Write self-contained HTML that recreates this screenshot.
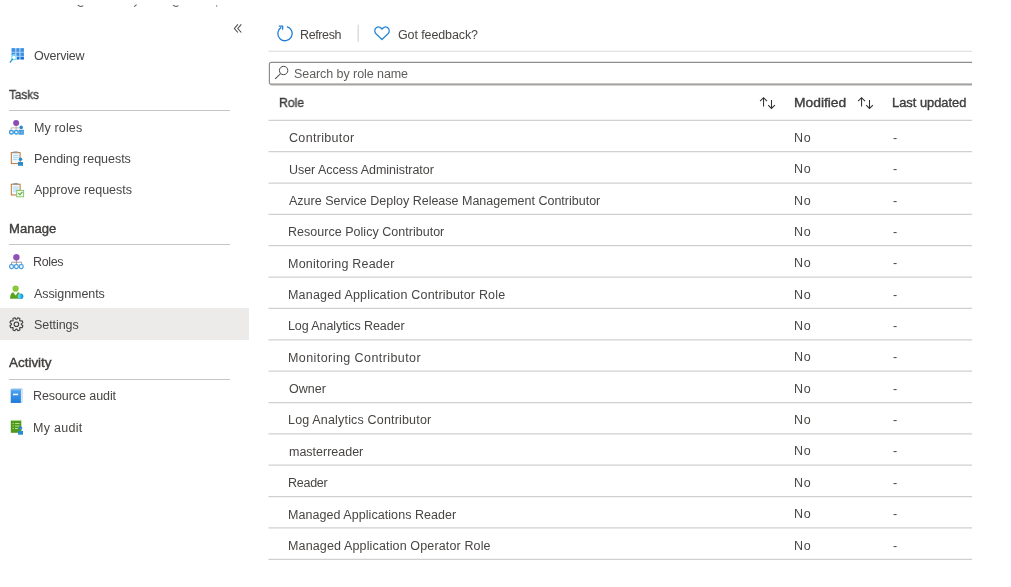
<!DOCTYPE html>
<html><head><meta charset="utf-8">
<style>
html,body{margin:0;padding:0;background:#fff;}
body{width:1011px;height:587px;overflow:hidden;position:relative;font-family:"Liberation Sans",sans-serif;font-size:12.5px;color:#484644;}
.t{position:absolute;white-space:nowrap;line-height:16px;will-change:transform;}
.b{font-weight:400;-webkit-text-stroke:0.35px #323130;}
.ln{position:absolute;height:1px;}
.ic{position:absolute;overflow:visible;}
</style></head><body>
<svg class="ic" style="left:0;top:0.6px" width="240" height="10" viewBox="0 0 240 10">
<path d="M77.8 4.2 Q80.5 6.6 83.2 4.6" fill="none" stroke="#605e5c" stroke-width="1.1"/>
<path d="M134.2 5.6 L136.6 3.6" fill="none" stroke="#605e5c" stroke-width="1.1"/>
<path d="M173 4.2 Q175.7 6.6 178.4 4.6" fill="none" stroke="#605e5c" stroke-width="1.1"/>
<path d="M216.7 4 V5.8" fill="none" stroke="#8a8886" stroke-width="1"/>
</svg>
<svg class="ic" style="left:230px;top:20px" width="16" height="16" viewBox="0 0 16 16"><path d="M7.9 4.4 L4.4 8.5 L7.9 12.5 M11.3 4.4 L7.8 8.5 L11.3 12.5" fill="none" stroke="#4a4846" stroke-width="1.05"/></svg>
<svg class="ic" style="left:8px;top:46px" width="18" height="18" viewBox="0 0 18 18">
<rect x="3.6" y="2.2" width="12.3" height="11.3" fill="#b4d4f6"/>
<g fill="#3d8fe4"><rect x="3.6" y="2.2" width="3.6" height="3.6"/><rect x="8.4" y="2.2" width="2.9" height="3.6"/><rect x="12.5" y="2.2" width="3.4" height="3.6"/>
<rect x="3.6" y="6.7" width="3.6" height="3.2"/><rect x="8.4" y="6.7" width="2.9" height="3.2"/><rect x="12.5" y="6.7" width="3.4" height="3.2"/></g>
<g fill="#1672d8"><rect x="3.6" y="10.8" width="3.6" height="2.7"/><rect x="8.4" y="10.8" width="2.9" height="2.7"/><rect x="12.5" y="10.8" width="3.4" height="2.7"/></g>
<circle cx="6" cy="11.4" r="2.6" fill="#fff" stroke="#fff" stroke-width="0.8"/>
<circle cx="6" cy="11.5" r="2.3" fill="#fff" stroke="#4fd3f6" stroke-width="1.0"/>
<path d="M4.4 13.3 L2.2 16.2" stroke="#2b95c9" stroke-width="1.3" stroke-linecap="round"/>
</svg><div class="t" style="left:33.70px;top:48.07px;letter-spacing:-0.224px;">Overview</div>
<div class="t b" style="left:9.45px;top:86.57px;transform:scaleX(0.9353);transform-origin:0 0;">Tasks</div>
<div class="ln" style="left:9px;top:110px;width:221px;background:#c8c6c4"></div>
<div class="t b" style="left:8.70px;top:221.07px;transform:scaleX(1.0459);transform-origin:0 0;">Manage</div>
<div class="ln" style="left:9px;top:244px;width:221px;background:#c8c6c4"></div>
<div style="position:absolute;left:0;top:307.7px;width:249px;height:32.6px;background:#edebe9"></div>
<div class="t b" style="left:9.15px;top:355.47px;transform:scaleX(1.0747);transform-origin:0 0;">Activity</div>
<div class="ln" style="left:9px;top:379px;width:221px;background:#c8c6c4"></div>
<svg class="ic" style="left:8px;top:118px" width="18" height="18" viewBox="0 0 18 18">
<path d="M3 9.9 H11.5 M3 9.9 V11.8 M8.15 7 V11.8" stroke="#b0a89e" stroke-width="0.8" fill="none"/>
<circle cx="8.15" cy="5" r="3" fill="#8b4cb5"/>
<circle cx="13.2" cy="9.4" r="1.8" fill="#2b8ccd"/>
<rect x="1.6" y="12.5" width="3.7" height="3.5" rx="1.4" fill="none" stroke="#3f9be0" stroke-width="1.4"/>
<rect x="6.5" y="12.5" width="3.7" height="3.5" rx="1.4" fill="none" stroke="#3f9be0" stroke-width="1.4"/>
<path d="M10.7 11.8 H15.9 V16.7 H10.7 Z" fill="#3f9be0"/>
<path d="M11.8 13.2 V15.4 M13.3 13.2 V15.4 M14.8 13.2 V15.4" stroke="#8cc7f0" stroke-width="0.6"/>
</svg><div class="t" style="left:33.50px;top:120.37px;letter-spacing:0.132px;">My roles</div>
<svg class="ic" style="left:8px;top:149px" width="18" height="18" viewBox="0 0 18 18">
<rect x="3.3" y="3.6" width="8.8" height="11" fill="#eef8ff" stroke="#c27632" stroke-width="1.0"/>
<rect x="5.5" y="2.4" width="4.4" height="1.8" fill="#9a9a9a"/>
<path d="M5 6.5 H10.5 M5 8.5 H10.5 M5 10.5 H9" stroke="#a6d5f5" stroke-width="0.9"/>
<circle cx="12.5" cy="10.2" r="1.8" fill="#2b8ccd"/>
<path d="M10 13 H15 V16.8 H10 Z" fill="#2b8ccd"/>
</svg><div class="t" style="left:33.50px;top:150.97px;letter-spacing:-0.029px;">Pending requests</div>
<svg class="ic" style="left:8px;top:181px" width="18" height="18" viewBox="0 0 18 18">
<rect x="3.3" y="3.2" width="8.8" height="10.8" fill="#eef8ff" stroke="#c27632" stroke-width="1.0"/>
<rect x="5.5" y="2" width="4.4" height="1.8" fill="#9a9a9a"/>
<path d="M5 6 H10.5 M5 8 H10.5 M5 10 H9" stroke="#a6d5f5" stroke-width="0.9"/>
<rect x="8.7" y="9.4" width="6.9" height="6.4" fill="#f3faef" stroke="#86c666" stroke-width="1.0"/>
<path d="M10.2 12.1 L11.9 13.7 L14.4 11" fill="none" stroke="#62b043" stroke-width="1.2"/>
</svg><div class="t" style="left:34.20px;top:182.37px;letter-spacing:0.005px;">Approve requests</div>
<svg class="ic" style="left:8px;top:252px" width="18" height="18" viewBox="0 0 18 18">
<path d="M3.6 10.2 H13.6 M3.6 10.2 V12 M8.4 7.5 V12 M13.6 10.2 V12" stroke="#8a8886" stroke-width="0.8" fill="none"/>
<circle cx="8.4" cy="5.3" r="3.2" fill="#9152b8"/>
<rect x="1.7" y="12.5" width="3.7" height="4" rx="1.4" fill="#fff" stroke="#4a9fe0" stroke-width="1.25"/>
<rect x="6.55" y="12.5" width="3.7" height="4" rx="1.4" fill="#fff" stroke="#4a9fe0" stroke-width="1.25"/>
<rect x="11.4" y="12.5" width="3.7" height="4" rx="1.4" fill="#fff" stroke="#4a9fe0" stroke-width="1.25"/>
</svg><div class="t" style="left:33.20px;top:254.47px;letter-spacing:-0.377px;">Roles</div>
<svg class="ic" style="left:8px;top:283px" width="18" height="18" viewBox="0 0 18 18">
<circle cx="7.6" cy="5.7" r="3.1" fill="#8cc63a"/>
<path d="M2 15.8 Q2.2 9.8 5.2 9.3 L7.6 12.6 L10 9.3 Q11.2 9.5 11.6 10.2 V15.8 Z" fill="#5aa51f"/>
<circle cx="12.5" cy="13.3" r="2.8" fill="#5ad2f4"/>
<path d="M12.5 10.5 A2.8 2.8 0 0 1 12.5 16.1 Z" fill="#1ea5df"/>
</svg><div class="t" style="left:34.20px;top:285.67px;letter-spacing:-0.071px;">Assignments</div>
<svg class="ic" style="left:8px;top:314px" width="18" height="20" viewBox="0 0 18 20">
<path d="M8.70 5.31 L9.96 3.69 L11.90 4.49 L11.65 6.53 L12.07 6.95 L14.11 6.70 L14.91 8.64 L13.29 9.90 L13.29 10.50 L14.91 11.76 L14.11 13.70 L12.07 13.45 L11.65 13.87 L11.90 15.91 L9.96 16.71 L8.70 15.09 L8.10 15.09 L6.84 16.71 L4.90 15.91 L5.15 13.87 L4.73 13.45 L2.69 13.70 L1.89 11.76 L3.51 10.50 L3.51 9.90 L1.89 8.64 L2.69 6.70 L4.73 6.95 L5.15 6.53 L4.90 4.49 L6.84 3.69 L8.10 5.31 Z" fill="none" stroke="#3b3a39" stroke-width="1.05" stroke-linejoin="round"/>
<circle cx="8.4" cy="10.2" r="2.3" fill="none" stroke="#3b3a39" stroke-width="1.05"/>
</svg><div class="t" style="left:34.00px;top:317.07px;letter-spacing:-0.059px;">Settings</div>
<svg class="ic" style="left:8px;top:386px" width="18" height="18" viewBox="0 0 18 18">
<defs><linearGradient id="bk" x1="0" y1="0" x2="0" y2="1"><stop offset="0" stop-color="#4fa6f1"/><stop offset="1" stop-color="#1f7ad9"/></linearGradient></defs>
<path d="M4 2.4 H14.4 V15.9 L12.9 16.9 H2.8 V3.3 Z" fill="#8fbde9"/>
<path d="M12.9 3.6 H14 V15.6 L12.9 16.3 Z" fill="#d6e8f8"/>
<rect x="2.8" y="3.3" width="10" height="13.6" fill="url(#bk)"/>
<rect x="2.8" y="3.3" width="10" height="0.9" fill="#8cc6f6"/>
<rect x="5" y="7.7" width="5.1" height="1.5" fill="#fff"/>
</svg><div class="t" style="left:33.00px;top:388.37px;letter-spacing:-0.077px;">Resource audit</div>
<svg class="ic" style="left:8px;top:417px" width="18" height="18" viewBox="0 0 18 18">
<rect x="2.8" y="3.2" width="10.5" height="12.6" fill="#4f9a1a"/>
<rect x="3.2" y="2.8" width="10" height="1" fill="#cde3b6"/>
<path d="M4.6 6.5 H5.8 M7 6.5 H11.5 M4.6 9 H5.8 M7 9 H11.5 M4.6 11.5 H5.8 M7 11.5 H10" stroke="#b6dc94" stroke-width="1"/>
<circle cx="12.5" cy="11.1" r="1.8" fill="#2b8ccd"/>
<path d="M10 13.9 H15 V17.7 H10 Z" fill="#2b8ccd"/>
</svg><div class="t" style="left:33.00px;top:419.67px;letter-spacing:0.276px;">My audit</div>
<svg class="ic" style="left:275px;top:24px" width="20" height="20" viewBox="0 0 20 20">
<path d="M12 2.6 A7.2 7.2 0 1 1 6.2 3.4" fill="none" stroke="#1f7fd6" stroke-width="1.3"/>
<path d="M3.8 2.2 H7.6 V5.8" fill="none" stroke="#1f7fd6" stroke-width="1.3"/>
</svg><div class="t" style="left:299.90px;top:26.87px;letter-spacing:-0.386px;">Refresh</div>
<svg class="ic" style="left:350px;top:20px" width="16" height="26" viewBox="0 0 16 26"><line x1="8.2" x2="8.2" y1="4.8" y2="21.8" stroke="#d6d4d2" stroke-width="1.2"/></svg>
<svg class="ic" style="left:372px;top:24px" width="20" height="18" viewBox="0 0 20 18">
<path d="M10 5.2 C8.6 2.8 6 2.3 4.2 3.8 C2.2 5.5 2.4 8.2 4.2 10 L10 15.5 L15.8 10 C17.6 8.2 17.8 5.5 15.8 3.8 C14 2.3 11.4 2.8 10 5.2 Z" fill="none" stroke="#2b88d8" stroke-width="1.3" stroke-linejoin="round"/>
</svg><div class="t" style="left:397.80px;top:26.87px;letter-spacing:-0.104px;">Got feedback?</div>
<svg class="ic" style="left:0;top:0" width="1011" height="100" viewBox="0 0 1011 100"><path d="M990 62.35 H271.4 Q269.4 62.35 269.4 64.35 V82.6 Q269.4 84.4 271.4 84.4 H990" fill="#fff" stroke="#8f8d8b" stroke-width="1.2"/><line x1="271" x2="990" y1="84.4" y2="84.4" stroke="#a6a4a2" stroke-width="2"/></svg>
<svg class="ic" style="left:272px;top:64px" width="18" height="18" viewBox="0 0 18 18">
<circle cx="11.6" cy="6.5" r="4.2" fill="none" stroke="#4a4846" stroke-width="1.0"/>
<path d="M8.6 9.5 L3.2 14.9" stroke="#4a4846" stroke-width="1.05"/>
</svg><div class="t" style="left:294.00px;top:66.47px;letter-spacing:-0.071px;color:#605e5c;">Search by role name</div>
<div style="position:absolute;left:972px;top:0;width:39px;height:587px;background:#fff"></div>
<div class="t b" style="left:278.52px;top:95.27px;transform:scaleX(0.9775);transform-origin:0 0;">Role</div>
<svg class="ic" style="left:758px;top:96px" width="20" height="14" viewBox="0 0 20 14">
<path d="M5.55 1.9 V10.4 M2.1 5.1 L5.55 1.7 L9 5.1" fill="none" stroke="#323130" stroke-width="1.05"/>
<path d="M13.5 4 V12.3 M10.2 9.1 L13.5 12.4 L16.9 9.1" fill="none" stroke="#323130" stroke-width="1.05"/>
</svg><div class="t b" style="left:793.69px;top:95.27px;transform:scaleX(1.1059);transform-origin:0 0;">Modified</div>
<svg class="ic" style="left:856px;top:96px" width="20" height="14" viewBox="0 0 20 14">
<path d="M5.55 1.9 V10.4 M2.1 5.1 L5.55 1.7 L9 5.1" fill="none" stroke="#323130" stroke-width="1.05"/>
<path d="M13.5 4 V12.3 M10.2 9.1 L13.5 12.4 L16.9 9.1" fill="none" stroke="#323130" stroke-width="1.05"/>
</svg><div class="t b" style="left:891.57px;top:95.27px;transform:scaleX(1.0290);transform-origin:0 0;">Last updated</div>
<svg class="ic" style="left:0;top:0" width="1011" height="587" viewBox="0 0 1011 587"><line x1="268.5" x2="972" y1="120.30" y2="120.30" stroke="#d2d0ce" stroke-width="1.25"/><line x1="268.5" x2="972" y1="151.66" y2="151.66" stroke="#d2d0ce" stroke-width="1.25"/><line x1="268.5" x2="972" y1="183.01" y2="183.01" stroke="#d2d0ce" stroke-width="1.25"/><line x1="268.5" x2="972" y1="214.37" y2="214.37" stroke="#d2d0ce" stroke-width="1.25"/><line x1="268.5" x2="972" y1="245.73" y2="245.73" stroke="#d2d0ce" stroke-width="1.25"/><line x1="268.5" x2="972" y1="277.09" y2="277.09" stroke="#d2d0ce" stroke-width="1.25"/><line x1="268.5" x2="972" y1="308.44" y2="308.44" stroke="#d2d0ce" stroke-width="1.25"/><line x1="268.5" x2="972" y1="339.80" y2="339.80" stroke="#d2d0ce" stroke-width="1.25"/><line x1="268.5" x2="972" y1="371.16" y2="371.16" stroke="#d2d0ce" stroke-width="1.25"/><line x1="268.5" x2="972" y1="402.51" y2="402.51" stroke="#d2d0ce" stroke-width="1.25"/><line x1="268.5" x2="972" y1="433.87" y2="433.87" stroke="#d2d0ce" stroke-width="1.25"/><line x1="268.5" x2="972" y1="465.23" y2="465.23" stroke="#d2d0ce" stroke-width="1.25"/><line x1="268.5" x2="972" y1="496.59" y2="496.59" stroke="#d2d0ce" stroke-width="1.25"/><line x1="268.5" x2="972" y1="527.94" y2="527.94" stroke="#d2d0ce" stroke-width="1.25"/><line x1="268.5" x2="972" y1="559.30" y2="559.30" stroke="#d2d0ce" stroke-width="1.25"/><line x1="268.5" x2="972" y1="51.25" y2="51.25" stroke="#dcdad8" stroke-width="1.2"/></svg>
<div class="t" style="left:288.70px;top:130.27px;letter-spacing:0.323px;">Contributor</div>
<div class="t" style="left:793.70px;top:129.87px;letter-spacing:0.773px;">No</div>
<div class="t" style="left:892.80px;top:129.87px;">-</div>
<div class="t" style="left:288.70px;top:161.63px;letter-spacing:-0.042px;">User Access Administrator</div>
<div class="t" style="left:793.70px;top:161.23px;letter-spacing:0.773px;">No</div>
<div class="t" style="left:892.80px;top:161.23px;">-</div>
<div class="t" style="left:288.70px;top:192.98px;">Azure Service Deploy Release Management Contributor</div>
<div class="t" style="left:793.70px;top:192.58px;letter-spacing:0.773px;">No</div>
<div class="t" style="left:892.80px;top:192.58px;">-</div>
<div class="t" style="left:287.70px;top:224.34px;letter-spacing:0.025px;">Resource Policy Contributor</div>
<div class="t" style="left:793.70px;top:223.94px;letter-spacing:0.773px;">No</div>
<div class="t" style="left:892.80px;top:223.94px;">-</div>
<div class="t" style="left:287.70px;top:255.70px;letter-spacing:0.221px;">Monitoring Reader</div>
<div class="t" style="left:793.70px;top:255.30px;letter-spacing:0.773px;">No</div>
<div class="t" style="left:892.80px;top:255.30px;">-</div>
<div class="t" style="left:287.70px;top:287.05px;letter-spacing:0.189px;">Managed Application Contributor Role</div>
<div class="t" style="left:793.70px;top:286.65px;letter-spacing:0.773px;">No</div>
<div class="t" style="left:892.80px;top:286.65px;">-</div>
<div class="t" style="left:287.70px;top:318.41px;letter-spacing:-0.082px;">Log Analytics Reader</div>
<div class="t" style="left:793.70px;top:318.01px;letter-spacing:0.773px;">No</div>
<div class="t" style="left:892.80px;top:318.01px;">-</div>
<div class="t" style="left:287.70px;top:349.77px;letter-spacing:0.428px;">Monitoring Contributor</div>
<div class="t" style="left:793.70px;top:349.37px;letter-spacing:0.773px;">No</div>
<div class="t" style="left:892.80px;top:349.37px;">-</div>
<div class="t" style="left:288.70px;top:381.13px;letter-spacing:0.012px;">Owner</div>
<div class="t" style="left:793.70px;top:380.73px;letter-spacing:0.773px;">No</div>
<div class="t" style="left:892.80px;top:380.73px;">-</div>
<div class="t" style="left:287.70px;top:412.48px;letter-spacing:0.175px;">Log Analytics Contributor</div>
<div class="t" style="left:793.70px;top:412.08px;letter-spacing:0.773px;">No</div>
<div class="t" style="left:892.80px;top:412.08px;">-</div>
<div class="t" style="left:288.70px;top:443.84px;letter-spacing:-0.007px;">masterreader</div>
<div class="t" style="left:793.70px;top:443.44px;letter-spacing:0.773px;">No</div>
<div class="t" style="left:892.80px;top:443.44px;">-</div>
<div class="t" style="left:287.70px;top:475.20px;letter-spacing:-0.267px;">Reader</div>
<div class="t" style="left:793.70px;top:474.80px;letter-spacing:0.773px;">No</div>
<div class="t" style="left:892.80px;top:474.80px;">-</div>
<div class="t" style="left:287.70px;top:506.55px;letter-spacing:0.057px;">Managed Applications Reader</div>
<div class="t" style="left:793.70px;top:506.15px;letter-spacing:0.773px;">No</div>
<div class="t" style="left:892.80px;top:506.15px;">-</div>
<div class="t" style="left:287.70px;top:537.91px;letter-spacing:0.141px;">Managed Application Operator Role</div>
<div class="t" style="left:793.70px;top:537.51px;letter-spacing:0.773px;">No</div>
<div class="t" style="left:892.80px;top:537.51px;">-</div>
</body></html>
